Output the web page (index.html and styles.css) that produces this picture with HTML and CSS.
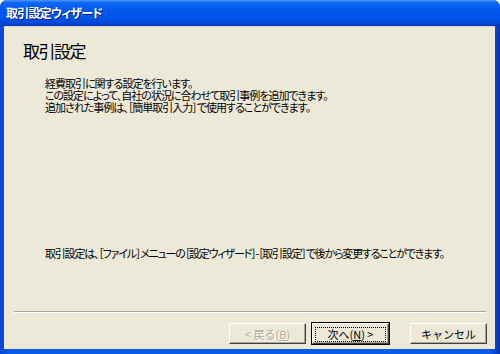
FILE: index.html
```html
<!DOCTYPE html>
<html lang="ja">
<head>
    <meta charset="UTF-8">
    <title>取引設定ウィザード</title>
    <link rel="stylesheet" href="styles.css">
</head>
<body>
    <div class="window">
        <div class="titlebar">取引設定ウィザード</div>

        <div class="client">
            <h1 class="heading">取引設定</h1>

            <p class="desc">
                経費取引に関する設定を行います。<br>
                この設定によって、自社の状況に合わせて取引事例を追加できます。<br>
                追加された事例は、［簡単取引入力］で使用することができます。
            </p>

            <p class="note">取引設定は、［ファイル］メニューの［設定ウィザード］-［取引設定］で後から変更することができます。</p>

            <div class="separator"></div>

            <div class="buttons">
                <button class="btn" disabled>&lt; 戻る(<u>B</u>)</button>
                <button class="btn default"><span class="focus">次へ(<u>N</u>) &gt;</span></button>
                <button class="btn cancel">キャンセル</button>
            </div>
        </div>
    </div>
</body>
</html>
```

FILE: styles.css
```css
body {
    margin: 0;
    background-color: #ffffff;
    font-family: "Noto Sans CJK JP", "Noto Sans", sans-serif;
    font-feature-settings: "palt";
}

.window {
    width: 500px;
    height: 354px;
    display: flex;
    flex-direction: column;
    border-radius: 7px 7px 0 0;
    background: linear-gradient(to right, #0846d8, #0a5ce8 2%, #0a5ce8 98%, #0433b8);
    overflow: hidden;
}

.titlebar {
    height: 26px;
    line-height: 26px;
    padding-left: 6px;
    color: #ffffff;
    font-size: 12px;
    font-weight: bold;
    letter-spacing: -0.8px;
    text-shadow: 1px 1px 0 #0a1e84;
    background: linear-gradient(to bottom, #4a98fa 0%, #1068f2 10%, #0058ee 40%, #0354e8 70%, #0148d8 88%, #003ab8 100%);
}

.client {
    flex: 1;
    display: flex;
    flex-direction: column;
    margin: 0 5px 5px 4px;
    background-color: #ece9d8;
    border-top: 1px solid #d8d4c4;
}

.heading {
    margin: 14px 0 0 19px;
    font-size: 17px;
    font-weight: normal;
    line-height: 20px;
    letter-spacing: -1.5px;
    color: #000000;
}

.desc {
    margin: 16px 0 0 41px;
    font-size: 11px;
    line-height: 12px;
    letter-spacing: -1px;
}

.note {
    margin: auto 0 51px 41px;
    font-size: 11px;
    line-height: 14px;
    letter-spacing: -1.2px;
}

.separator {
    margin: 0 9px 0 10px;
    border-top: 1px solid #aca899;
    border-bottom: 1px solid #ffffff;
}

.buttons {
    display: flex;
    justify-content: flex-end;
    gap: 6px;
    padding: 10px 8px 5px 0;
}

.btn {
    width: 77px;
    height: 21px;
    padding: 0;
    font-family: inherit;
    font-size: 11px;
    color: #000000;
    background-color: #ece9d8;
    border: 1px solid;
    border-color: #ffffff #404040 #404040 #ffffff;
    box-shadow: inset -1px -1px 0 #aca899;
}

.btn:disabled {
    color: #aca899;
    text-shadow: 1px 1px 0 #ffffff;
}

.btn.default {
    outline: 1px solid #000000;
    outline-offset: 0;
}

.focus {
    display: inline-block;
    padding: 0 7px;
    line-height: 13px;
    border: 1px dotted #000000;
    width: 55px;
}

.btn.cancel {
    margin-left: 15px;
}
```
